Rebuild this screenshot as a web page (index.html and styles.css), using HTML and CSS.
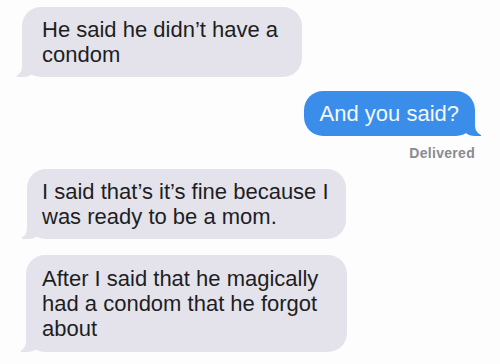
FILE: index.html
```html
<!DOCTYPE html>
<html>

<head>
  <title>Messages</title>
  <link rel="stylesheet" href="styles.css">
</head>

<body>
  <div class="thread">
    <div class="bubble received first">He said he didn’t have a condom</div>
    <div class="bubble sent">And you said?</div>
    <div class="status">Delivered</div>
    <div class="bubble received third">I said that’s it’s fine because I was ready to be a mom.</div>
    <div class="bubble received fourth">After I said that he magically had a condom that he forgot about</div>
  </div>
</body>

</html>
```

FILE: styles.css
```css
body {
  margin: 0;
  background-color: #fdfdfd;
  font-family: "Liberation Sans", Arial, sans-serif;
}

.thread {
  display: flex;
  flex-direction: column;
  padding: 7px 25px 0 22px;
}

.bubble {
  position: relative;
  box-sizing: border-box;
  font-size: 22px;
  line-height: 25px;
  border-radius: 19px;
  padding: 10px 16px 10px 20px;
}

.bubble.received {
  align-self: flex-start;
  background-color: #e4e3ec;
  color: #1e1e22;
}

.bubble.received::before {
  content: "";
  position: absolute;
  left: -5px;
  bottom: 0;
  width: 20px;
  height: 18px;
  background-color: #e4e3ec;
  border-bottom-right-radius: 14px 12px;
}

.bubble.received::after {
  content: "";
  position: absolute;
  left: -11px;
  bottom: 0;
  width: 11px;
  height: 20px;
  background-color: #fdfdfd;
  border-bottom-right-radius: 10px;
}

.bubble.first {
  width: 280px;
}

.bubble.third {
  width: 319px;
  margin-top: 8px;
  margin-left: 5px;
  padding-left: 15px;
}

.bubble.fourth {
  width: 321px;
  height: 97px;
  margin-top: 16px;
  margin-left: 4px;
  padding: 11px 16px 11px 16px;
}

.bubble.sent {
  align-self: flex-end;
  margin-top: 14px;
  background-color: #3a8eea;
  color: #f4f8ff;
  padding: 10px 16px 10px 16px;
}

.bubble.sent::before {
  content: "";
  position: absolute;
  right: -6px;
  bottom: 0;
  width: 20px;
  height: 18px;
  background-color: #3a8eea;
  border-bottom-left-radius: 14px 12px;
}

.bubble.sent::after {
  content: "";
  position: absolute;
  right: -12px;
  bottom: 0;
  width: 12px;
  height: 20px;
  background-color: #fdfdfd;
  border-bottom-left-radius: 10px;
}

.status {
  align-self: flex-end;
  margin-top: 9px;
  font-size: 14px;
  font-weight: bold;
  color: #8a8a90;
  letter-spacing: 0.3px;
}
```
